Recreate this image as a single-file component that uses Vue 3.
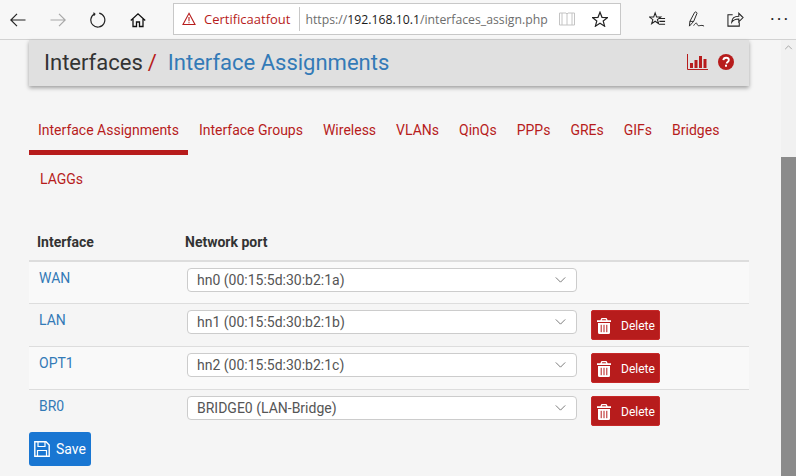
<script setup>
const tabs = [
  { label: "Interface Assignments", active: true },
  { label: "Interface Groups" },
  { label: "Wireless" },
  { label: "VLANs" },
  { label: "QinQs" },
  { label: "PPPs" },
  { label: "GREs" },
  { label: "GIFs" },
  { label: "Bridges" },
  { label: "LAGGs" },
];

const rows = [
  { name: "WAN", port: "hn0 (00:15:5d:30:b2:1a)", canDelete: false },
  { name: "LAN", port: "hn1 (00:15:5d:30:b2:1b)", canDelete: true },
  { name: "OPT1", port: "hn2 (00:15:5d:30:b2:1c)", canDelete: true },
  { name: "BR0", port: "BRIDGE0 (LAN-Bridge)", canDelete: true },
];
</script>

<template>
  <div class="window">
    <header class="toolbar">
      <div class="navBtns">
        <svg class="navIcon" viewBox="0 0 16 16"><path d="M15.500 8H.8M7 1.800.8 8 7 14.200" fill="none" stroke="#222" stroke-width="1.200" /></svg>
        <svg class="navIcon" viewBox="0 0 16 16"><path d="M.5 8h14.700M9 1.800 15.200 8 9 14.200" fill="none" stroke="#a8a8a8" stroke-width="1.200" /></svg>
        <svg class="navIcon" viewBox="0 0 16 16"><path d="M4.700 1.800A7 7 0 1 0 9.200 1.200M3.400.8l1.500 1.200-1.200 1.700" fill="none" stroke="#222" stroke-width="1.200" /></svg>
        <svg class="navIcon" viewBox="0 0 16 16"><path d="M.8 8.500 8 1.800l7.200 6.700M3 7v7.500h3.500V10h3v4.500H13V7" fill="none" stroke="#111" stroke-width="1.300" /></svg>
      </div>
      <div class="addressBar">
        <svg class="warnIcon" viewBox="0 0 14 14"><path d="M7 1.300 13 12.500H1ZM7 5v4.300M7 10.200v1.100" fill="none" stroke="#b71c1c" stroke-width="1.100" /></svg>
        <span class="certError">Certificaatfout</span>
        <span class="divider"></span>
        <span class="url">https://<b>192.168.10.1</b>/interfaces_assign.php</span>
        <svg class="bookIcon" viewBox="0 0 16 14"><path d="M.5 1h6.500l1 1 1-1h6.500v12H.5ZM8 2v11M3 1v12M13 1v12" fill="none" stroke="#c4c4c4" stroke-width="1" /></svg>
        <svg class="starIcon" viewBox="0 0 16 16"><path d="M8 1.200 10 6.300l5.400.3-4.200 3.400 1.400 5.200L8 12.300l-4.600 2.900L4.800 10 .6 6.600 6 6.300Z" fill="none" stroke="#222" stroke-width="1.200" /></svg>
      </div>
      <div class="toolBtns">
        <svg class="toolIcon" viewBox="0 0 18 16"><path d="M6.500 1 8 5.300l4.500.1-3.600 2.700 1.300 4.300-3.700-2.600-3.700 2.600 1.300-4.300L.5 5.400 5 5.300ZM11 7h6M11 10h6M11 13h6" fill="none" stroke="#222" stroke-width="1.100" /></svg>
        <svg class="toolIcon" viewBox="0 0 18 18"><path d="M1.500 16 2 11 7 1.500C7.500.5 9.500 1 9.500 2.500L6 11ZM2 11l4 0M6 15.500c1.500-2.500 3-3.500 3.500-2 .5 1.500 1 2.500 3 2 1.500-.3 3-.5 4.500.5" fill="none" stroke="#222" stroke-width="1" /></svg>
        <svg class="toolIcon" viewBox="0 0 18 16"><path d="M6 3H1v12h12v-4M5 11c0-4.500 3-6.500 7.500-6.500V1.500L17 6l-4.500 4.500v-3C9 7.500 6.500 8.500 5 11Z" fill="none" stroke="#222" stroke-width="1.100" /></svg>
        <span class="more">···</span>
      </div>
    </header>

    <div class="viewport">
      <main class="page">
        <div class="titleBar">
          <h1><span>Interfaces</span><span class="slash">/</span><a class="crumbLink">Interface Assignments</a></h1>
          <div class="titleIcons">
            <svg class="chartIcon" viewBox="0 0 21 16"><path d="M.5 0v15.500H21" fill="none" stroke="#b71c1c" /><path d="M3 9h3v5H3ZM7.500 6h3v8h-3ZM12 2h3v12h-3ZM16.500 5h3v9h-3Z" fill="#b71c1c" /></svg>
            <svg class="helpIcon" viewBox="0 0 16 16"><circle cx="8" cy="8" r="8" fill="#b71c1c" /><path d="M5.300 6.200C5.500 4.500 6.600 3.700 8.100 3.700c1.500 0 2.700.9 2.700 2.300 0 2-2.100 2-2.100 3.500" fill="none" stroke="#fff" stroke-width="1.900" /><rect x="7" y="10.700" width="2" height="2" fill="#fff" /></svg>
          </div>
        </div>

        <nav class="tabs">
          <a v-for="tab in tabs" :key="tab.label" class="tab" :class="{ active: tab.active }">{{ tab.label }}</a>
        </nav>

        <section class="assignTable">
          <div class="headRow">
            <div class="colName">Interface</div>
            <div>Network port</div>
          </div>
          <div v-for="row in rows" :key="row.name" class="row">
            <a class="colName ifName">{{ row.name }}</a>
            <div class="portSelect">
              <span>{{ row.port }}</span>
              <svg class="chevron" viewBox="0 0 12 7"><path d="M.5.500 6 6l5.500-5.500" fill="none" stroke="#666" stroke-width="1" /></svg>
            </div>
            <button v-if="row.canDelete" class="deleteBtn">
              <svg class="trash" viewBox="0 0 14 16"><path fill="#fff" d="M4.500 0h5l1.200 2.300H14v1.700H0V2.300h3.300ZM5.300 1.200l-.5 1.100h4.400l-.5-1.100ZM1 5h12v9.500Q13 16 11.500 16h-9Q1 16 1 14.500Z" fill-rule="evenodd" /><path d="M4.200 6.800v7.400M7 6.800v7.400M9.800 6.800v7.400" stroke="#b71c1c" stroke-width="1" /></svg>
              Delete
            </button>
          </div>
        </section>

        <button class="saveBtn">
          <svg class="saveIcon" viewBox="0 0 16 16"><path fill="none" stroke="#fff" stroke-width="1.400" d="M.8.800h11.200l3.200 3.200v11.200H.8Z" /><path fill="none" stroke="#fff" stroke-width="1.200" d="M4 1v4.500h7V1M3.500 15V9.500h9V15" /></svg>
          Save
        </button>
      </main>

      <div class="scrollbar">
        <svg class="scrollUp" viewBox="0 0 10 6"><path d="M1 5 5 1l4 4" fill="none" stroke="#999" stroke-width="1" /></svg>
        <div class="thumb"></div>
      </div>
    </div>
  </div>
</template>

<style>
html, body {
  margin: 0;
  overflow: hidden;
}
</style>

<style scoped>
.window {
  width: 796px;
  height: 476px;
  display: flex;
  flex-direction: column;
  overflow: hidden;
  background: #f5f5f5;
  font-family: Roboto, sans-serif;
}

.toolbar {
  height: 39px;
  flex: none;
  display: flex;
  align-items: flex-start;
  background: #f7f7f7;
  border-bottom: 1px solid #d2d2d2;
  box-sizing: content-box;
}

.navBtns {
  width: 173px;
  height: 39px;
  display: flex;
  align-items: center;
  padding-left: 10px;
  box-sizing: border-box;
  gap: 24px;
}

.navIcon {
  width: 16px;
  height: 16px;
  flex: none;
}

.addressBar {
  width: 448px;
  height: 32px;
  margin-top: 3px;
  display: flex;
  align-items: center;
  background: #fff;
  border: 1px solid #c8c8c8;
  box-sizing: border-box;
  font-family: "Open Sans", sans-serif;
  font-size: 13px;
  white-space: nowrap;
}

.warnIcon {
  width: 14px;
  height: 14px;
  margin-left: 8px;
  flex: none;
}

.certError {
  margin-left: 8px;
  color: #b71c1c;
}

.divider {
  width: 1px;
  height: 24px;
  margin: 0 5px 0 9px;
  background: #c8c8c8;
}

.url {
  font-size: 12.25px;
  color: #6d6d6d;
}

.url b {
  font-weight: 400;
  color: #1a1a1a;
}

.bookIcon {
  width: 16px;
  height: 14px;
  margin-left: auto;
  flex: none;
}

.starIcon {
  width: 16px;
  height: 16px;
  margin: 0 12px 0 17px;
  flex: none;
}

.toolBtns {
  flex: 1;
  height: 39px;
  display: flex;
  align-items: center;
  padding-left: 28px;
  gap: 22px;
}

.toolIcon {
  width: 17px;
  height: 17px;
  flex: none;
}

.more {
  margin-left: 4px;
  font-size: 18px;
  letter-spacing: 2px;
  color: #222;
}

.viewport {
  flex: 1;
  min-height: 0;
  display: flex;
}

.page {
  width: 781px;
  flex: none;
  box-sizing: border-box;
  padding: 0 32px 0 29px;
}

.titleBar {
  height: 46px;
  display: flex;
  align-items: center;
  justify-content: space-between;
  padding: 0 15px 2px;
  box-sizing: border-box;
  background: #e0e0e0;
  box-shadow: 0 2px 4px rgba(0, 0, 0, 0.35);
}

h1 {
  margin: 0;
  font-size: 22px;
  font-weight: 400;
  white-space: pre;
  color: #333;
}

.slash {
  margin: 0 11px 0 5px;
  color: #b71c1c;
}

.crumbLink {
  color: #337ab7;
}

.titleIcons {
  display: flex;
  align-items: center;
  gap: 10px;
}

.chartIcon {
  width: 21px;
  height: 16px;
}

.helpIcon {
  width: 16px;
  height: 16px;
}

.tabs {
  margin-top: 20px;
  display: flex;
  flex-wrap: wrap;
}

.tab {
  padding: 14px 10px 10px;
  font-size: 14px;
  line-height: 20px;
  color: #b71c1c;
  border-bottom: 5px solid transparent;
}

.tab:last-child {
  padding-left: 11px;
}

.tab.active {
  padding-left: 9px;
  padding-right: 9px;
  margin-right: 1px;
  border-bottom-color: #b71c1c;
}

.assignTable {
  margin-top: 18px;
}

.headRow {
  height: 40px;
  display: flex;
  align-items: center;
  box-sizing: border-box;
  padding-top: 2px;
  border-bottom: 2px solid #ddd;
  font-size: 14px;
  font-weight: 700;
  color: #333;
}

.colName {
  width: 156px;
  padding-left: 8px;
  box-sizing: border-box;
  flex: none;
}

.row {
  display: flex;
  align-items: flex-start;
  min-height: 42px;
  box-sizing: border-box;
  padding: 6px 0;
  border-bottom: 1px solid #ddd;
}

.row:nth-child(even) {
  background: #f9f9f9;
}

.row:last-child {
  border-bottom: none;
}

.ifName {
  padding-left: 10px;
  font-size: 14px;
  line-height: 20px;
  color: #337ab7;
}

.portSelect {
  width: 390px;
  height: 24px;
  margin-left: 2px;
  display: flex;
  align-items: center;
  justify-content: space-between;
  padding: 0 10px 0 9px;
  box-sizing: border-box;
  background: #fff;
  border: 1px solid #ccc;
  border-radius: 4px;
  font-size: 14px;
  color: #555;
}

.chevron {
  width: 11px;
  height: 6px;
}

.deleteBtn {
  width: 69px;
  height: 30px;
  margin-left: 14px;
  display: flex;
  align-items: center;
  gap: 10px;
  padding: 1px 5px 0;
  background: #b71c1c;
  border: 1px solid #c62828;
  border-radius: 2px;
  color: #fff;
  font-family: Roboto, sans-serif;
  font-size: 12px;
}

.trash {
  width: 14px;
  height: 16px;
  flex: none;
}

.saveBtn {
  width: 62px;
  height: 34px;
  display: flex;
  align-items: center;
  gap: 6px;
  padding: 0 5px;
  background: #1976d2;
  border: none;
  border-radius: 3px;
  color: #fff;
  font-family: Roboto, sans-serif;
  font-size: 14px;
}

.saveIcon {
  width: 16px;
  height: 16px;
  flex: none;
}

.scrollbar {
  flex: 1;
  display: flex;
  flex-direction: column;
  background: #f1f1f1;
}

.scrollUp {
  width: 9px;
  height: 5px;
  margin: 5px auto 0;
}

.thumb {
  margin-top: 107px;
  flex: 1;
  background: #8b8b8b;
}
</style>
